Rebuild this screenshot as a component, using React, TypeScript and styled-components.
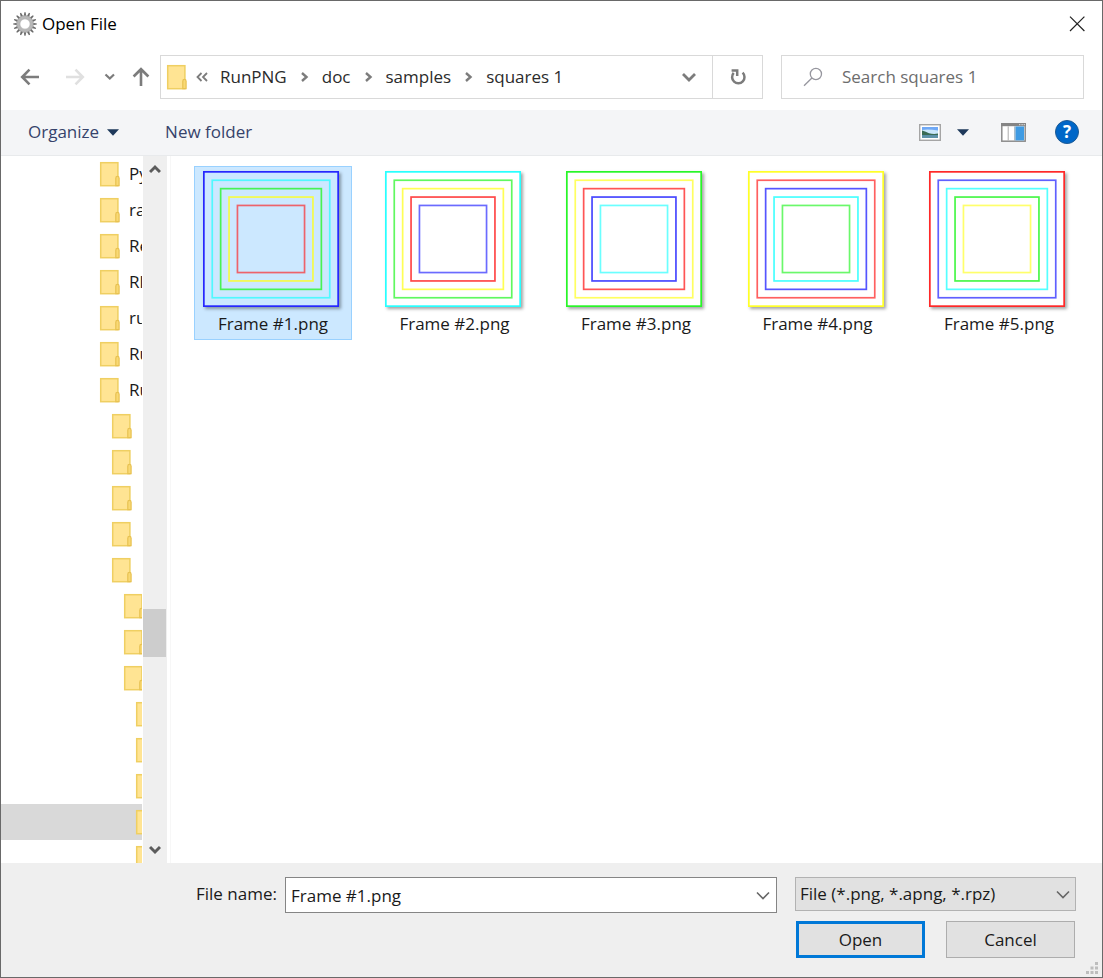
import React from 'react';
import styled, { createGlobalStyle } from 'styled-components';

const GlobalStyle = createGlobalStyle`
  *, *::before, *::after { box-sizing: border-box; }
  body {
    margin: 0;
    background: #fff;
    color: #1a1a1a;
    font: 17px/24px "Open Sans", "Noto Sans", sans-serif;
  }
  button, input, select { font: inherit; color: inherit; margin: 0; }
  svg { display: block; flex: none; }
`;

const Dialog = styled.div`
  position: relative;
  display: flex;
  flex-direction: column;
  height: 100vh;
  border: 1px solid #696969;
  background: #fff;
`;

const TitleBar = styled.header`
  display: flex;
  align-items: center;
  gap: 5px;
  height: 46px;
  padding: 0 16px 0 12px;
  color: #000;
`;

const Title = styled.h1`
  flex: 1;
  margin: 0;
  font-size: 17px;
  font-weight: 400;
`;

const IconButton = styled.button`
  display: flex;
  align-items: center;
  justify-content: center;
  padding: 0;
  border: 0;
  background: transparent;
`;

const NavRow = styled.nav`
  display: flex;
  align-items: center;
  height: 63px;
  padding: 0 18px 3px 19px;
`;

const NavButtons = styled.div`
  display: flex;
  align-items: center;
  gap: 16px;
  width: 140px;
`;

const HistoryPair = styled.div`
  display: flex;
  gap: 25px;
`;

const AddressBar = styled.div`
  display: flex;
  flex: 1;
  height: 44px;
  margin-right: 18px;
  border: 1px solid #d9d9d9;
  min-width: 0;
`;

const Crumbs = styled.div`
  display: flex;
  flex: 1;
  align-items: center;
  gap: 12px;
  padding-left: 5px;
  overflow: hidden;
  white-space: nowrap;
`;

const CrumbRoot = styled.span`
  display: flex;
  align-items: center;
  gap: 8px;
`;

const CrumbLink = styled.a`
  color: #2b2b2b;
  text-decoration: none;
`;

const AddressButton = styled(IconButton)<{ $divided?: boolean }>`
  width: ${(p) => (p.$divided ? 50 : 46)}px;
  border-left: ${(p) => (p.$divided ? '1px solid #d9d9d9' : '0')};
`;

const SearchBox = styled.label`
  display: flex;
  flex: 0 1 303px;
  align-items: center;
  gap: 19px;
  height: 44px;
  min-width: 0;
  padding-left: 21px;
  border: 1px solid #d9d9d9;
`;

const SearchInput = styled.input`
  flex: 1;
  min-width: 0;
  padding: 0;
  border: 0;
  outline: 0;
  background: transparent;
  &::placeholder { color: #6d6d6d; opacity: 1; }
`;

const Toolbar = styled.div`
  display: flex;
  align-items: center;
  height: 46px;
  padding: 0 23px 1px 27px;
  border-bottom: 1px solid #e8eaec;
  background: #f4f5f7;
`;

const ToolbarButton = styled.button`
  display: flex;
  align-items: center;
  gap: 8px;
  margin-right: 46px;
  padding: 0;
  border: 0;
  background: transparent;
  color: #36436b;
`;

const ViewTools = styled.div`
  display: flex;
  align-items: center;
  margin-left: auto;
`;

const ViewGroup = styled.div`
  display: flex;
  align-items: center;
  gap: 16px;
  margin-right: 32px;
`;

const HelpButton = styled.button`
  width: 24px;
  height: 24px;
  margin-left: 29px;
  padding: 0;
  border: 1px solid #1d5a94;
  border-radius: 50%;
  background: #0067c8;
  color: #fff;
  font-weight: 700;
  line-height: 22px;
  text-align: center;
`;

const Panes = styled.main`
  display: flex;
  flex: 1;
  min-height: 0;
`;

const Tree = styled.ul`
  width: 141px;
  margin: 0;
  padding: 0;
  overflow: hidden;
  list-style: none;
`;

const TreeRow = styled.li<{ $level: number; $selected?: boolean }>`
  display: flex;
  align-items: center;
  gap: 8px;
  height: 36px;
  padding-left: ${(p) => 98 + p.$level * 12}px;
  overflow: hidden;
  white-space: nowrap;
  background: ${(p) => (p.$selected ? '#d9d9d9' : 'transparent')};
`;

const ScrollBar = styled.div`
  display: flex;
  flex-direction: column;
  width: 24px;
  margin-left: 1px;
  background: #efefef;
`;

const ScrollArrow = styled(IconButton)`
  height: 26px;
`;

const ScrollTrack = styled.div`
  display: grid;
  flex: 1;
  grid-template-rows: 427fr 48px 180fr;
`;

const ScrollThumb = styled.div`
  grid-row: 2;
  margin-right: 1px;
  background: #cdcdcd;
`;

const FilePane = styled.section`
  flex: 1;
  margin-left: 3px;
  padding: 10px 24px 10px 23px;
  border-left: 1px solid #f7f7f7;
  overflow: hidden;
`;

const FileGrid = styled.ul`
  display: grid;
  grid-template-columns: repeat(auto-fill, 158px);
  justify-content: space-between;
  gap: 23px;
  margin: 0;
  padding: 0;
  list-style: none;
`;

const FileTile = styled.li<{ $selected?: boolean }>`
  display: flex;
  flex-direction: column;
  align-items: center;
  gap: 5px;
  height: 174px;
  padding-top: 4px;
  border: 1px solid ${(p) => (p.$selected ? '#99d1ff' : 'transparent')};
  background: ${(p) => (p.$selected ? '#cce8ff' : 'transparent')};
`;

const Preview = styled.svg`
  margin-right: 4px;
  box-shadow: 2px 2px 3px rgba(0, 0, 0, 0.36);
`;

const Footer = styled.footer`
  display: grid;
  grid-template-columns: 83px 1fr 281px;
  align-content: start;
  row-gap: 8px;
  height: 114px;
  padding: 14px 26px 0 195px;
  background: #efefef;
`;

const NameLabel = styled.label`
  line-height: 34px;
  white-space: nowrap;
`;

const NameCombo = styled.div`
  display: flex;
  height: 36px;
  margin: 0 18px 0 6px;
  border: 1px solid #858585;
  background: #fff;
`;

const NameInput = styled.input`
  flex: 1;
  min-width: 0;
  padding: 2px 5px 0;
  border: 0;
  outline: 0;
  background: transparent;
`;

const ComboArrow = styled(IconButton)`
  width: 26px;
`;

const TypeField = styled.div`
  display: grid;
  align-items: center;
  height: 34px;
  > * { grid-area: 1 / 1; }
  > svg { justify-self: end; margin-right: 6px; pointer-events: none; }
`;

const TypeSelect = styled.select`
  appearance: none;
  width: 100%;
  height: 34px;
  padding: 0 24px 0 4px;
  border: 1px solid #b2b2b2;
  border-radius: 0;
  background: #e1e1e1;
`;

const Actions = styled.div`
  display: flex;
  grid-column: 3;
  justify-content: space-between;
  padding: 0 1px;
`;

const ActionButton = styled.button<{ $primary?: boolean }>`
  width: 129px;
  height: 37px;
  padding: 0;
  border: ${(p) => (p.$primary ? '3px solid #0078d7' : '1px solid #adadad')};
  background: #e1e1e1;
`;

const Grip = styled.svg`
  position: absolute;
  right: 4px;
  bottom: 3px;
`;

const GearIcon = () => (
  <svg width="24" height="24" viewBox="0 0 24 24" aria-hidden="true">
    <g fill="#6a6a6a">
      {Array.from({ length: 16 }, (_, i) => (
        <path key={i} d="M10.7 4.5L11.4 .2H12.6L13.3 4.5Z" transform={`rotate(${i * 22.5} 12 12)`} />
      ))}
    </g>
    <circle cx="12" cy="12" r="6.8" fill="#fff" stroke="#b8b8b8" strokeWidth="3.2" />
    <circle cx="12" cy="12" r="8.4" fill="none" stroke="#9a9a9a" strokeWidth=".6" />
    <circle cx="12" cy="12" r="5.1" fill="none" stroke="#a4a4a4" strokeWidth=".6" />
  </svg>
);

const CloseIcon = () => (
  <svg width="18" height="18" viewBox="0 0 18 18" fill="none" stroke="#222" strokeWidth="1.2">
    <path d="M2 1.6L16.4 16M16.4 1.6L2 16" />
  </svg>
);

const Arrow = ({ turn = 0, color = '#7c7c7c' }: { turn?: number; color?: string }) => (
  <svg width="20" height="20" viewBox="0 0 20 20" fill="none" stroke={color} strokeWidth="2.6">
    <path d="M19 10H2M9.5 2.6L2.2 10L9.5 17.4" transform={`rotate(${turn} 10 10)`} />
  </svg>
);

type StrokeProps = { w: number; h: number; color?: string; weight?: number; d: string };
const Stroke = ({ w, h, color = '#7c7c7c', weight = 2.2, d }: StrokeProps) => (
  <svg width={w} height={h} viewBox={`0 0 ${w} ${h}`} fill="none" stroke={color} strokeWidth={weight}>
    <path d={d} />
  </svg>
);

const CrumbChevron = () => <Stroke w={11} h={10} weight={2.4} d="M3 1L7.5 5L3 9" />;

const DownTriangle = () => (
  <svg width="12" height="7" viewBox="0 0 12 7">
    <path d="M0 .3H12L6 6.7Z" fill="#1e395b" />
  </svg>
);

const RefreshIcon = () => (
  <svg width="18" height="18" viewBox="0 0 18 18" fill="none" stroke="#7c7c7c" strokeWidth="2.5">
    <path d="M13.6 4.6A6.2 6.2 0 1 1 4.7 4.9" />
    <path d="M2.6 2.4H8.2V8" />
  </svg>
);

const SearchIcon = () => (
  <svg width="20" height="20" viewBox="0 0 20 20" fill="none" stroke="#96969e" strokeWidth="1.3">
    <circle cx="12.9" cy="7" r="5.6" />
    <path d="M8.9 11L1 18.8" />
  </svg>
);

const FolderIcon = () => (
  <svg width="22" height="26" viewBox="0 0 22 26" aria-hidden="true">
    <rect x="1.7" y="1.7" width="17.2" height="23" fill="#ffe493" stroke="#efcf62" strokeWidth="1.5" />
    <path d="M16.8 24.7V17.2Q16.8 15.4 18.4 15.4Q20.1 15.4 20.1 17.2V24.7Z" fill="#f9d975" stroke="#e8c252" strokeWidth="1.2" />
  </svg>
);

const PictureIcon = () => (
  <svg width="22" height="17" viewBox="0 0 22 17">
    <rect x=".7" y=".7" width="20.6" height="15.6" fill="#fff" stroke="#a5a5a5" strokeWidth="1.4" />
    <rect x="3" y="3" width="16" height="11" fill="#6fa8f5" />
    <path d="M3 6Q9 4.8 19 6.6V10H3Z" fill="#c9e6fa" />
    <path d="M3 6.6Q7 7.6 10 9.2Q14 10.4 19 9.6V11.6H3Z" fill="#3a6b54" />
    <rect x="3" y="11.4" width="16" height="2.6" fill="#5f93a9" />
  </svg>
);

const PreviewPaneIcon = () => (
  <svg width="25" height="19" viewBox="0 0 25 19">
    <rect x=".8" y=".8" width="23.4" height="17.4" fill="#fff" stroke="#8c8c8c" strokeWidth="1.5" />
    <rect x="0" y="0" width="25" height="3.2" fill="#858585" />
    <path d="M18 1.7H19.4M20.4 1.7H21.8M22.6 1.7H24" stroke="#d0d0d0" strokeWidth="1.2" />
    <path d="M7.2 3.4V17.5" stroke="#ababab" />
    <rect x="14.4" y="3.4" width="8.6" height="14" fill="#3f9be3" />
    <path d="M13.8 3.4V17.5" stroke="#8ba3b5" />
  </svg>
);

const BLUE = '#1c1cff';
const CYAN = '#1cffff';
const GREEN = '#1cf51c';
const YELLOW = '#ffff1c';
const RED = '#ff1c1c';

const files = [
  { name: 'Frame #1.png', rings: [BLUE, CYAN, GREEN, YELLOW, RED] },
  { name: 'Frame #2.png', rings: [CYAN, GREEN, YELLOW, RED, BLUE] },
  { name: 'Frame #3.png', rings: [GREEN, YELLOW, RED, BLUE, CYAN] },
  { name: 'Frame #4.png', rings: [YELLOW, RED, BLUE, CYAN, GREEN] },
  { name: 'Frame #5.png', rings: [RED, BLUE, CYAN, GREEN, YELLOW] },
];

const ringOpacity = [0.95, 0.7, 0.75, 0.8, 0.65];

const folders: { level: number; label?: string; selected?: boolean }[] = [
  { level: 0, label: 'Py' },
  { level: 0, label: 'ra' },
  { level: 0, label: 'Re' },
  { level: 0, label: 'Rl' },
  { level: 0, label: 'ru' },
  { level: 0, label: 'Ru' },
  { level: 0, label: 'Ru' },
  ...Array.from({ length: 5 }, () => ({ level: 1 })),
  ...Array.from({ length: 3 }, () => ({ level: 2 })),
  ...Array.from({ length: 3 }, () => ({ level: 3 })),
  { level: 3, selected: true },
  { level: 3 },
];

const path = ['RunPNG', 'doc', 'samples', 'squares 1'];

export default function App() {
  return (
    <>
      <GlobalStyle />
      <Dialog role="dialog" aria-label="Open File">
        <TitleBar>
          <GearIcon />
          <Title>Open File</Title>
          <IconButton aria-label="Close"><CloseIcon /></IconButton>
        </TitleBar>

        <NavRow>
          <NavButtons>
            <HistoryPair>
              <IconButton aria-label="Back"><Arrow /></IconButton>
              <IconButton aria-label="Forward"><Arrow turn={180} color="#e0e0e0" /></IconButton>
            </HistoryPair>
            <IconButton aria-label="Recent locations">
              <Stroke w={14} h={8} d="M4.5 1.5L8.8 5.5L13 1.5" />
            </IconButton>
            <IconButton aria-label="Up"><Arrow turn={90} /></IconButton>
          </NavButtons>
          <AddressBar>
            <Crumbs>
              <CrumbRoot>
                <FolderIcon />
                <Stroke w={12} h={10} weight={1.8} d="M5.5 1L1.5 5L5.5 9M11 1L7 5L11 9" />
              </CrumbRoot>
              {path.map((part, i) => (
                <React.Fragment key={part}>
                  {i > 0 && <CrumbChevron />}
                  <CrumbLink href="#">{part}</CrumbLink>
                </React.Fragment>
              ))}
            </Crumbs>
            <AddressButton aria-label="Previous locations">
              <Stroke w={14} h={10} weight={2.8} d="M1 2L7 8L13 2" />
            </AddressButton>
            <AddressButton $divided aria-label="Refresh"><RefreshIcon /></AddressButton>
          </AddressBar>
          <SearchBox>
            <SearchIcon />
            <SearchInput type="text" placeholder="Search squares 1" aria-label="Search squares 1" />
          </SearchBox>
        </NavRow>

        <Toolbar>
          <ToolbarButton>Organize <DownTriangle /></ToolbarButton>
          <ToolbarButton>New folder</ToolbarButton>
          <ViewTools>
            <ViewGroup>
              <IconButton aria-label="Change your view"><PictureIcon /></IconButton>
              <IconButton aria-label="More view options"><DownTriangle /></IconButton>
            </ViewGroup>
            <IconButton aria-label="Show the preview pane"><PreviewPaneIcon /></IconButton>
            <HelpButton aria-label="Get help">?</HelpButton>
          </ViewTools>
        </Toolbar>

        <Panes>
          <Tree>
            {folders.map((f, i) => (
              <TreeRow key={i} $level={f.level} $selected={f.selected}>
                <FolderIcon />
                {f.label}
              </TreeRow>
            ))}
          </Tree>
          <ScrollBar>
            <ScrollArrow aria-label="Scroll up">
              <Stroke w={12} h={10} color="#5c5c5c" weight={3} d="M1 8L6 3L11 8" />
            </ScrollArrow>
            <ScrollTrack><ScrollThumb /></ScrollTrack>
            <ScrollArrow aria-label="Scroll down">
              <Stroke w={12} h={10} color="#5c5c5c" weight={3} d="M1 2L6 7L11 2" />
            </ScrollArrow>
          </ScrollBar>
          <FilePane>
            <FileGrid>
              {files.map((file, i) => (
                <FileTile key={file.name} $selected={i === 0}>
                  <Preview width="136" height="136" viewBox="0 0 136 136" fill="none" strokeWidth="1.7">
                    {file.rings.map((color, r) => {
                      const inset = 0.85 + r * 8.4;
                      const side = 136 - inset * 2;
                      return (
                        <rect key={r} x={inset} y={inset} width={side} height={side} stroke={color} strokeOpacity={ringOpacity[r]} />
                      );
                    })}
                  </Preview>
                  <span>{file.name}</span>
                </FileTile>
              ))}
            </FileGrid>
          </FilePane>
        </Panes>

        <Footer>
          <NameLabel htmlFor="file-name">File name:</NameLabel>
          <NameCombo>
            <NameInput id="file-name" type="text" defaultValue="Frame #1.png" />
            <ComboArrow aria-label="Recent file names">
              <Stroke w={14} h={9} color="#666" weight={1.6} d="M1 1.5L7 7.5L13 1.5" />
            </ComboArrow>
          </NameCombo>
          <TypeField>
            <TypeSelect aria-label="File type">
              <option>File (*.png, *.apng, *.rpz)</option>
            </TypeSelect>
            <Stroke w={14} h={9} color="#666" weight={1.6} d="M1 1.5L7 7.5L13 1.5" />
          </TypeField>
          <Actions>
            <ActionButton $primary>Open</ActionButton>
            <ActionButton>Cancel</ActionButton>
          </Actions>
        </Footer>
        <Grip width="12" height="12" viewBox="0 0 12 12" fill="#bdbdbd" aria-hidden="true">
          <path d="M9 0H12V3H9ZM9 4.5H12V7.5H9ZM4.5 4.5H7.5V7.5H4.5ZM9 9H12V12H9ZM4.5 9H7.5V12H4.5ZM0 9H3V12H0Z" />
        </Grip>
      </Dialog>
    </>
  );
}
